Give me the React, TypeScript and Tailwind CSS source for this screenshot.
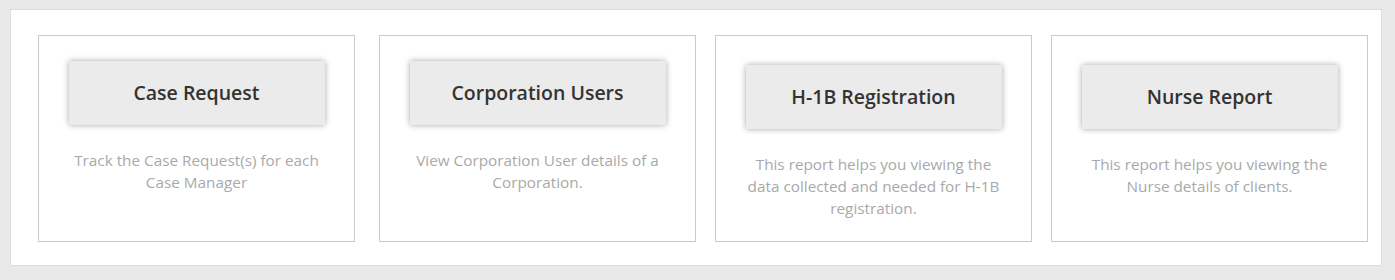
import React from "react";

const cards = [
  { title: "Case Request", desc: "Track the Case Request(s) for each Case Manager", mt: "mt-[25px]", ml: "ml-0" },
  { title: "Corporation Users", desc: "View Corporation User details of a Corporation.", mt: "mt-[25px]", ml: "ml-[24px]" },
  { title: "H-1B Registration", desc: "This report helps you viewing the data collected and needed for H-1B registration.", mt: "mt-[29px]", ml: "ml-[19px]" },
  { title: "Nurse Report", desc: "This report helps you viewing the Nurse details of clients.", mt: "mt-[29px]", ml: "ml-[19px]" },
];

export default function App() {
  return (
    <div
      className="w-[1395px] h-[280px] bg-[#e9e9e9] pt-[9px] pl-[10px]"
      style={{ fontFamily: '"Open Sans", "Liberation Sans", sans-serif' }}
    >
      <div className="w-[1372px] h-[257px] bg-white border border-[#dedede] flex pt-[25px] pl-[27px]">
        {cards.map((c) => (
          <div
            key={c.title}
            className={`${c.ml} w-[317px] h-[207px] border border-[#cacaca] flex flex-col items-center`}
          >
            <div
              className={`${c.mt} w-[256px] h-[64px] bg-[#ebebeb] shadow-[0_0_6px_rgba(0,0,0,0.35)] flex items-center justify-center`}
            >
              <span className="text-[19.5px] font-semibold text-[#333333]">{c.title}</span>
            </div>
            <p className="mt-[24px] w-[268px] text-center text-[15.3px] leading-[22px] text-[#a9a9a9]">{c.desc}</p>
          </div>
        ))}
      </div>
    </div>
  );
}
